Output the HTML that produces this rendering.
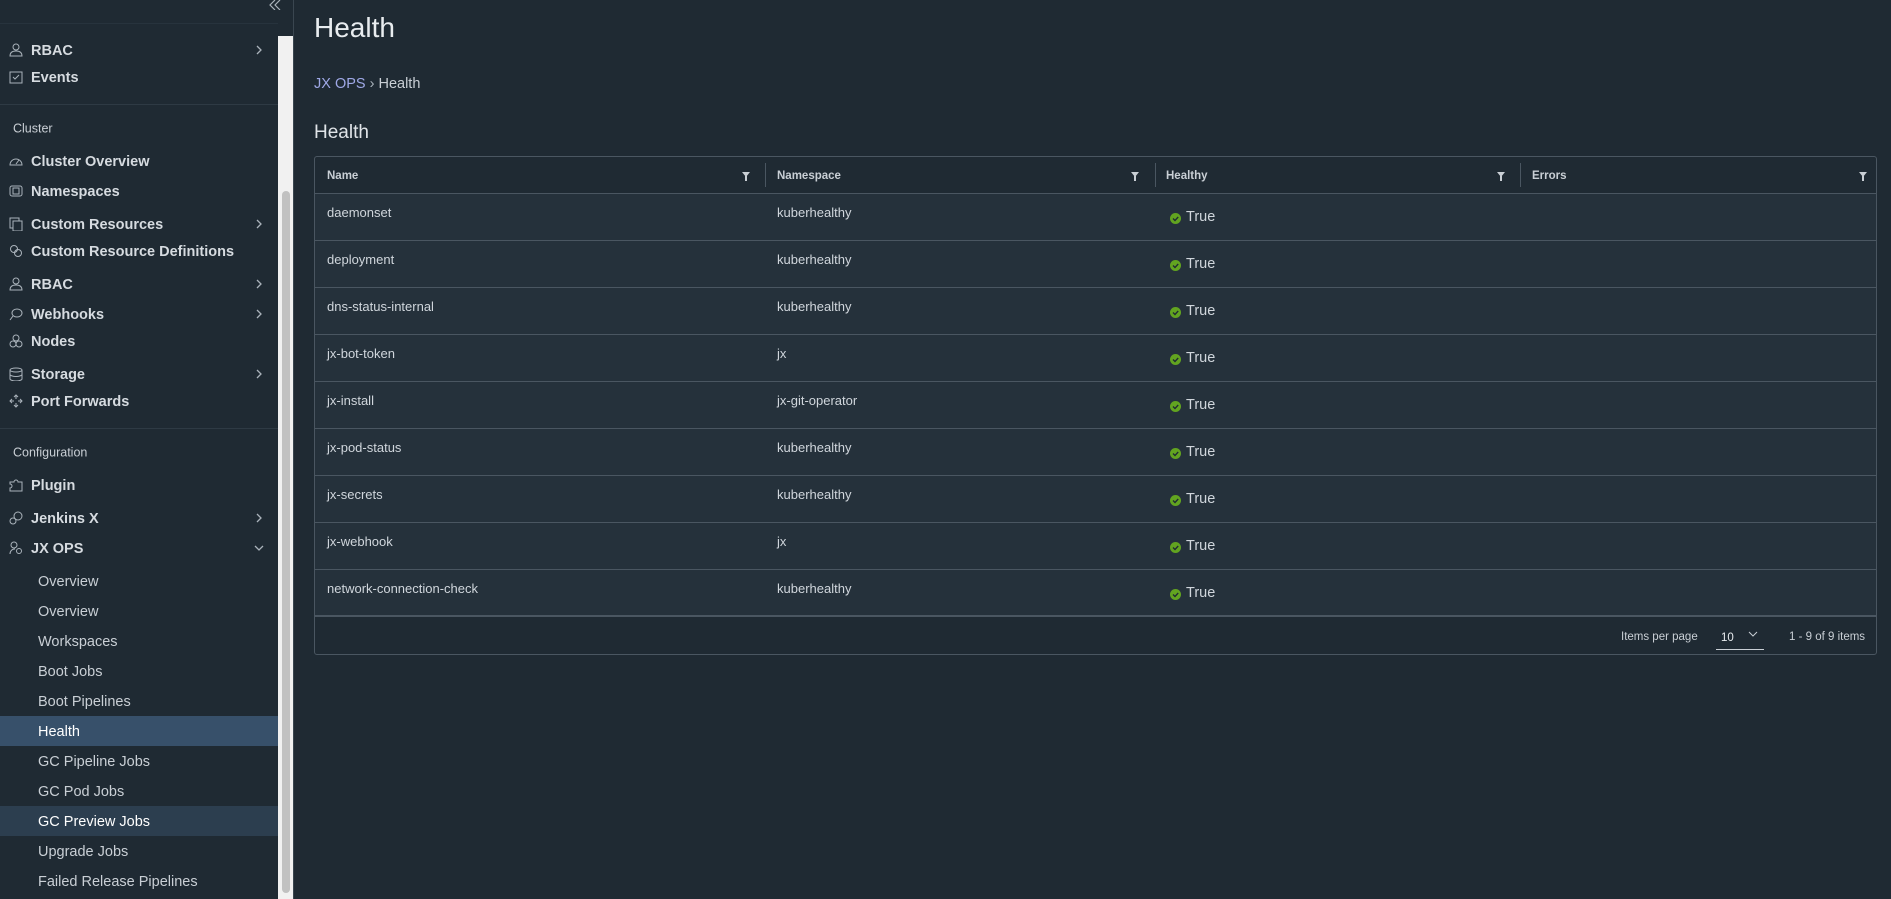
<!DOCTYPE html>
<html><head><meta charset="utf-8"><style>
*{box-sizing:border-box;margin:0;padding:0}
body{width:1891px;height:899px;background:#1f2a33;font-family:"Liberation Sans",sans-serif;color:#d6dbe0;position:relative;overflow:hidden}
.side{position:absolute;left:0;top:0;width:294px;height:899px;background:#1f2a33;border-right:1px solid #3a4650}
.track{position:absolute;left:278px;top:36px;width:15px;height:863px;background:#f1f1f1}
.thumb{position:absolute;left:282px;top:191px;width:8px;height:702px;background:#c1c1c1;border-radius:4px}
.it{position:absolute;left:31px;font-size:14.5px;font-weight:bold;color:#d6dbe0;transform:translateY(-45%)}
.sub{position:absolute;left:38px;font-size:14.5px;color:#c9cfd5;transform:translateY(-45%)}
.sec{position:absolute;left:13px;font-size:12.5px;color:#c9cfd5;transform:translateY(-45%)}
.ico{position:absolute;left:9px;width:14px;height:14px;transform:translateY(-50%)}
.chev{position:absolute;left:254px;transform:translateY(-50%);width:10px;height:10px}
.hl{position:absolute;left:0;width:278px;height:30px}
.div{position:absolute;left:0;width:278px;height:1px;background:#2e3a44}
.main{position:absolute;left:314px}
.tbl{position:absolute;left:314px;top:156px;width:1563px;height:499px;border:1px solid #4a5661;border-radius:3px;background:#1f2a33;overflow:hidden}
.hdr{position:absolute;left:0;top:0;width:100%;height:37px;border-bottom:1px solid #4a5661;font-size:11.5px;font-weight:bold;color:#c9cfd5}
.hc{position:absolute;top:13px}
.sep{position:absolute;top:6px;width:1px;height:24px;background:#4a5661}
.row{position:absolute;left:0;width:100%;height:47px;background:#25313b;border-bottom:1px solid #4a5661;font-size:13px;color:#d0d6dc}
.row span{position:absolute;top:11px}
.ok{position:absolute;left:855px;top:19px;width:11px;height:11px}
.tru{position:absolute;left:871px!important;top:15px!important;font-size:14.5px}
.filt{position:absolute;top:15px;width:0;height:0;border-left:4px solid transparent;border-right:4px solid transparent;border-top:5px solid #c9cfd5}
.filt:after{content:"";position:absolute;left:-1px;top:-1px;width:2px;height:5px;background:#c9cfd5}
</style></head><body>
<div class="side">
<svg style="position:absolute;left:268px;top:0" width="14" height="10" viewBox="0 0 14 10"><path d="M7 0L2 5l5 5M12 0L7 5l5 5" stroke="#aab3bb" fill="none" stroke-width="1.2"/></svg>
<div class="div" style="top:23px;background:#27333d"></div>
<div class="track"></div><div class="thumb"></div>
<div class="hl" style="top:716px;background:#37506a"></div>
<div class="hl" style="top:806px;background:#2c3e4f"></div>

<svg class="ico" style="top:50px" viewBox="0 0 14 14"><circle cx="7" cy="4" r="3" stroke="#aab3bb" fill="none"/><path d="M1 13c0-4 3-5 6-5s6 1 6 5z" stroke="#aab3bb" fill="none"/></svg><div class="it" style="top:50px">RBAC</div>
<svg class="ico" style="top:77px" viewBox="0 0 14 14"><rect x="1" y="2" width="12" height="11" stroke="#aab3bb" fill="none"/><path d="M4 7l2 2 4-4" stroke="#aab3bb" fill="none"/></svg><div class="it" style="top:77px">Events</div>
<div class="div" style="top:104px"></div>
<div class="sec" style="top:128px">Cluster</div>
<svg class="ico" style="top:161px" viewBox="0 0 14 14"><path d="M1 11a6 6 0 1 1 12 0z" stroke="#aab3bb" fill="none"/><path d="M7 10l3-4" stroke="#aab3bb"/></svg><div class="it" style="top:161px">Cluster Overview</div>
<svg class="ico" style="top:191px" viewBox="0 0 14 14"><rect x="1" y="2" width="12" height="10" rx="2" stroke="#aab3bb" fill="none"/><rect x="4" y="4" width="6" height="6" stroke="#aab3bb" fill="none"/></svg><div class="it" style="top:191px">Namespaces</div>
<svg class="ico" style="top:224px" viewBox="0 0 14 14"><rect x="1" y="1" width="9" height="10" stroke="#aab3bb" fill="none"/><rect x="4" y="4" width="9" height="10" stroke="#aab3bb" fill="#1f2a33"/></svg><div class="it" style="top:224px">Custom Resources</div>
<svg class="ico" style="top:251px" viewBox="0 0 14 14"><circle cx="5" cy="5" r="3.5" stroke="#aab3bb" fill="none"/><circle cx="9" cy="9" r="3.5" stroke="#aab3bb" fill="none"/></svg><div class="it" style="top:251px">Custom Resource Definitions</div>
<svg class="ico" style="top:284px" viewBox="0 0 14 14"><circle cx="7" cy="4" r="3" stroke="#aab3bb" fill="none"/><path d="M1 13c0-4 3-5 6-5s6 1 6 5z" stroke="#aab3bb" fill="none"/></svg><div class="it" style="top:284px">RBAC</div>
<svg class="ico" style="top:314px" viewBox="0 0 14 14"><ellipse cx="8" cy="6" rx="5" ry="4" stroke="#aab3bb" fill="none"/><path d="M4 9l-3 4" stroke="#aab3bb"/></svg><div class="it" style="top:314px">Webhooks</div>
<svg class="ico" style="top:341px" viewBox="0 0 14 14"><circle cx="7" cy="4" r="3" stroke="#aab3bb" fill="none"/><circle cx="4" cy="10" r="3" stroke="#aab3bb" fill="none"/><circle cx="10" cy="10" r="3" stroke="#aab3bb" fill="none"/></svg><div class="it" style="top:341px">Nodes</div>
<svg class="ico" style="top:374px" viewBox="0 0 14 14"><ellipse cx="7" cy="3" rx="6" ry="2" stroke="#aab3bb" fill="none"/><path d="M1 3v9c0 1 3 2 6 2s6-1 6-2V3M1 7.5c0 1 3 2 6 2s6-1 6-2" stroke="#aab3bb" fill="none"/></svg><div class="it" style="top:374px">Storage</div>
<svg class="ico" style="top:401px" viewBox="0 0 14 14"><path d="M7 1v4M7 9v4M1 7h4M9 7h4M5 3l2-2 2 2M5 11l2 2 2-2M3 5L1 7l2 2M11 5l2 2-2 2" stroke="#aab3bb" fill="none"/></svg><div class="it" style="top:401px">Port Forwards</div>
<div class="div" style="top:428px"></div>
<div class="sec" style="top:452px">Configuration</div>
<svg class="ico" style="top:485px" viewBox="0 0 14 14"><path d="M1 4h4a2 2 0 0 1 4 0h4v9H1v-3a2 2 0 0 0 0-4z" stroke="#aab3bb" fill="none"/></svg><div class="it" style="top:485px">Plugin</div>
<svg class="ico" style="top:518px" viewBox="0 0 14 14"><circle cx="4" cy="10" r="3" stroke="#aab3bb" fill="none"/><circle cx="9" cy="5" r="4" stroke="#aab3bb" fill="none"/></svg><div class="it" style="top:518px">Jenkins X</div>
<svg class="ico" style="top:548px" viewBox="0 0 14 14"><circle cx="5" cy="4" r="3" stroke="#aab3bb" fill="none"/><path d="M1 13c0-3 2-5 5-5" stroke="#aab3bb" fill="none"/><circle cx="10" cy="10" r="2.5" stroke="#aab3bb" fill="none"/></svg><div class="it" style="top:548px">JX OPS</div>
<svg class="chev" style="top:50px" viewBox="0 0 10 10"><path d="M3 1l4 4-4 4" stroke="#aab3bb" fill="none" stroke-width="1.3"/></svg>
<svg class="chev" style="top:224px" viewBox="0 0 10 10"><path d="M3 1l4 4-4 4" stroke="#aab3bb" fill="none" stroke-width="1.3"/></svg>
<svg class="chev" style="top:284px" viewBox="0 0 10 10"><path d="M3 1l4 4-4 4" stroke="#aab3bb" fill="none" stroke-width="1.3"/></svg>
<svg class="chev" style="top:314px" viewBox="0 0 10 10"><path d="M3 1l4 4-4 4" stroke="#aab3bb" fill="none" stroke-width="1.3"/></svg>
<svg class="chev" style="top:374px" viewBox="0 0 10 10"><path d="M3 1l4 4-4 4" stroke="#aab3bb" fill="none" stroke-width="1.3"/></svg>
<svg class="chev" style="top:518px" viewBox="0 0 10 10"><path d="M3 1l4 4-4 4" stroke="#aab3bb" fill="none" stroke-width="1.3"/></svg>
<svg class="chev" style="top:548px" viewBox="0 0 10 10"><path d="M1 3l4 4 4-4" stroke="#aab3bb" fill="none" stroke-width="1.3"/></svg>
<div class="sub" style="top:581px">Overview</div>
<div class="sub" style="top:611px">Overview</div>
<div class="sub" style="top:641px">Workspaces</div>
<div class="sub" style="top:671px">Boot Jobs</div>
<div class="sub" style="top:701px">Boot Pipelines</div>
<div class="sub" style="top:731px;color:#fff">Health</div>
<div class="sub" style="top:761px">GC Pipeline Jobs</div>
<div class="sub" style="top:791px">GC Pod Jobs</div>
<div class="sub" style="top:821px;color:#fff">GC Preview Jobs</div>
<div class="sub" style="top:851px">Upgrade Jobs</div>
<div class="sub" style="top:881px">Failed Release Pipelines</div>
</div>

<div class="main" style="top:12px;font-size:28px;color:#e8ecef">Health</div>
<div class="main" style="top:76px;font-size:14.5px"><span style="color:#9fa8e6">JX OPS</span>&nbsp;<span style="color:#aab3bb">&#8250;</span>&nbsp;<span style="color:#c9cfd5">Health</span></div>
<div class="main" style="top:122px;font-size:19px;color:#e0e4e8">Health</div>

<div class="tbl">
<div class="hdr">
<span class="hc" style="left:12px">Name</span><div class="filt" style="left:427px"></div><div class="sep" style="left:450px"></div>
<span class="hc" style="left:462px">Namespace</span><div class="filt" style="left:816px"></div><div class="sep" style="left:840px"></div>
<span class="hc" style="left:851px">Healthy</span><div class="filt" style="left:1182px"></div><div class="sep" style="left:1205px"></div>
<span class="hc" style="left:1217px">Errors</span><div class="filt" style="left:1544px"></div>
</div>
<div class="row" style="top:37px"><span style="left:12px">daemonset</span><span style="left:462px">kuberhealthy</span><svg class="ok" viewBox="0 0 11 11"><circle cx="5.5" cy="5.5" r="5.5" fill="#62a420"/><path d="M3 5.5l2 2 3.2-3.5" stroke="#1f2a33" fill="none" stroke-width="1.3"/></svg><span class="tru">True</span></div>
<div class="row" style="top:84px"><span style="left:12px">deployment</span><span style="left:462px">kuberhealthy</span><svg class="ok" viewBox="0 0 11 11"><circle cx="5.5" cy="5.5" r="5.5" fill="#62a420"/><path d="M3 5.5l2 2 3.2-3.5" stroke="#1f2a33" fill="none" stroke-width="1.3"/></svg><span class="tru">True</span></div>
<div class="row" style="top:131px"><span style="left:12px">dns-status-internal</span><span style="left:462px">kuberhealthy</span><svg class="ok" viewBox="0 0 11 11"><circle cx="5.5" cy="5.5" r="5.5" fill="#62a420"/><path d="M3 5.5l2 2 3.2-3.5" stroke="#1f2a33" fill="none" stroke-width="1.3"/></svg><span class="tru">True</span></div>
<div class="row" style="top:178px"><span style="left:12px">jx-bot-token</span><span style="left:462px">jx</span><svg class="ok" viewBox="0 0 11 11"><circle cx="5.5" cy="5.5" r="5.5" fill="#62a420"/><path d="M3 5.5l2 2 3.2-3.5" stroke="#1f2a33" fill="none" stroke-width="1.3"/></svg><span class="tru">True</span></div>
<div class="row" style="top:225px"><span style="left:12px">jx-install</span><span style="left:462px">jx-git-operator</span><svg class="ok" viewBox="0 0 11 11"><circle cx="5.5" cy="5.5" r="5.5" fill="#62a420"/><path d="M3 5.5l2 2 3.2-3.5" stroke="#1f2a33" fill="none" stroke-width="1.3"/></svg><span class="tru">True</span></div>
<div class="row" style="top:272px"><span style="left:12px">jx-pod-status</span><span style="left:462px">kuberhealthy</span><svg class="ok" viewBox="0 0 11 11"><circle cx="5.5" cy="5.5" r="5.5" fill="#62a420"/><path d="M3 5.5l2 2 3.2-3.5" stroke="#1f2a33" fill="none" stroke-width="1.3"/></svg><span class="tru">True</span></div>
<div class="row" style="top:319px"><span style="left:12px">jx-secrets</span><span style="left:462px">kuberhealthy</span><svg class="ok" viewBox="0 0 11 11"><circle cx="5.5" cy="5.5" r="5.5" fill="#62a420"/><path d="M3 5.5l2 2 3.2-3.5" stroke="#1f2a33" fill="none" stroke-width="1.3"/></svg><span class="tru">True</span></div>
<div class="row" style="top:366px"><span style="left:12px">jx-webhook</span><span style="left:462px">jx</span><svg class="ok" viewBox="0 0 11 11"><circle cx="5.5" cy="5.5" r="5.5" fill="#62a420"/><path d="M3 5.5l2 2 3.2-3.5" stroke="#1f2a33" fill="none" stroke-width="1.3"/></svg><span class="tru">True</span></div>
<div class="row" style="top:413px;border-bottom:2px solid #4a5661"><span style="left:12px">network-connection-check</span><span style="left:462px">kuberhealthy</span><svg class="ok" viewBox="0 0 11 11"><circle cx="5.5" cy="5.5" r="5.5" fill="#62a420"/><path d="M3 5.5l2 2 3.2-3.5" stroke="#1f2a33" fill="none" stroke-width="1.3"/></svg><span class="tru">True</span></div>
<div style="position:absolute;top:474px;left:1306px;font-size:11.5px;color:#c9cfd5">Items per page</div>
<div style="position:absolute;top:475px;left:1406px;font-size:11.5px;color:#e8ecef">10</div>
<svg style="position:absolute;top:473px;left:1433px" width="10" height="8" viewBox="0 0 10 8"><path d="M1 2l4 4 4-4" stroke="#c9cfd5" fill="none"/></svg>
<div style="position:absolute;top:492px;left:1401px;width:48px;height:1px;background:#c9cfd5"></div>
<div style="position:absolute;top:474px;left:1474px;font-size:11.5px;color:#c9cfd5">1 - 9 of 9 items</div>
</div>
</body></html>
